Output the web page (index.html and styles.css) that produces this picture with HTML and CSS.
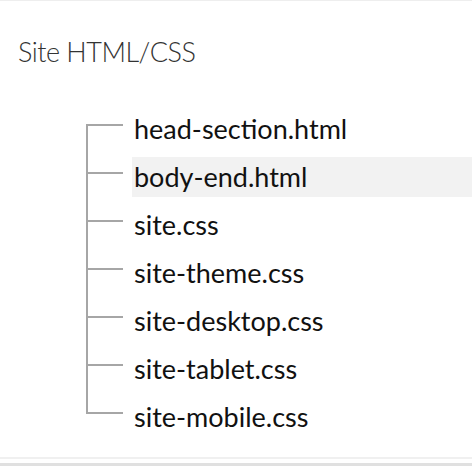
FILE: index.html
```html
<!DOCTYPE html>
<html lang="en">
<head>
<meta charset="utf-8">
<title>Site HTML/CSS</title>
<link rel="stylesheet" href="styles.css">
</head>
<body>
<div class="panel">
  <h1 class="title">Site HTML/CSS</h1>
  <ul class="tree">
    <li class="item">head-section.html</li>
    <li class="item selected">body-end.html</li>
    <li class="item">site.css</li>
    <li class="item">site-theme.css</li>
    <li class="item">site-desktop.css</li>
    <li class="item">site-tablet.css</li>
    <li class="item">site-mobile.css</li>
  </ul>
</div>
<div class="gap"></div>
<div class="bottom-bar"></div>
</body>
</html>
```

FILE: styles.css
```css
html, body {
  margin: 0;
  padding: 0;
  background: #ffffff;
}

body {
  font-family: Lato, "Open Sans", sans-serif;
  width: 472px;
  height: 466px;
  overflow: hidden;
}

.panel {
  border-top: 1px solid #eeeeee;
  border-bottom: 2px solid #f0f0f0;
  padding: 34px 0 20px 18px;
}

.title {
  margin: 0;
  font-size: 27px;
  line-height: 34px;
  font-weight: 300;
  letter-spacing: -0.5px;
  color: #333333;
}

.tree {
  list-style: none;
  margin: 40px 0 0 0;
  padding: 0 0 0 114px;
  display: flex;
  flex-direction: column;
  gap: 8px;
}

.item {
  position: relative;
  height: 40px;
  line-height: 40px;
  padding-left: 2px;
  font-size: 27px;
  color: #111111;
}

.item::before {
  content: "";
  position: absolute;
  left: -46px;
  top: -33px;
  width: 35px;
  height: 48px;
  border-left: 2px solid #a6a6a6;
  border-bottom: 2px solid #a6a6a6;
}

.item:first-child::before {
  top: 15px;
  height: 0;
}

.selected {
  background: #f2f2f2;
}

.gap {
  height: 4px;
}

.bottom-bar {
  height: 3px;
  background: #e0e0e0;
}
```
